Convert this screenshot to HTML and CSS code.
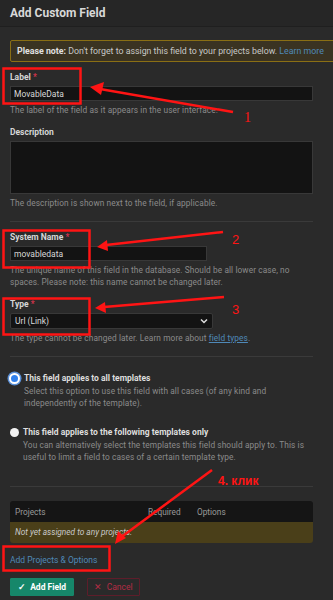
FILE: index.html
```html
<!DOCTYPE html>
<html lang="en">
<head>
    <meta charset="UTF-8">
    <meta name="viewport" content="width=device-width, initial-scale=1.0">
    <title>Add Custom Field</title>
    <link rel="stylesheet" href="styles.css">
</head>
<body>
<div class="modal">
    <header class="modal-header">
        <h1>Add Custom Field</h1>
    </header>

    <div class="modal-body">
        <div class="note">
            <strong>Please note:</strong> Don't forget to assign this field to your projects below. <a href="#">Learn more</a>
        </div>

        <div class="field">
            <label>Label <span class="req">*</span></label>
            <input type="text" class="input input-wide" value="MovableData">
            <p class="help">The label of the field as it appears in the user interface.</p>
        </div>

        <div class="field">
            <label>Description</label>
            <textarea class="input textarea"></textarea>
            <p class="help">The description is shown next to the field, if applicable.</p>
        </div>

        <hr>

        <div class="field">
            <label>System Name <span class="req">*</span></label>
            <input type="text" class="input input-short" value="movabledata">
            <p class="help">The unique name of this field in the database. Should be all lower case, no spaces. Please note: this name cannot be changed later.</p>
        </div>

        <div class="field">
            <label>Type <span class="req">*</span></label>
            <div class="select">
                <span>Url (Link)</span>
                <svg width="8" height="6" viewBox="0 0 8 6"><path d="M1 1.5 L4 4.5 L7 1.5" fill="none" stroke="#ddd" stroke-width="1.5"/></svg>
            </div>
            <p class="help">The type cannot be changed later. Learn more about <a href="#" class="ul">field types</a>.</p>
        </div>

        <hr>

        <div class="option first">
            <span class="radio checked"></span>
            <div>
                <div class="option-title">This field applies to all templates</div>
                <p class="help">Select this option to use this field with all cases (of any kind and independently of the template).</p>
            </div>
        </div>

        <div class="option second">
            <span class="radio"></span>
            <div>
                <div class="option-title">This field applies to the following templates only</div>
                <p class="help">You can alternatively select the templates this field should apply to. This is useful to limit a field to cases of a certain template type.</p>
            </div>
        </div>

        <hr class="hr-last">

        <div class="projects">
            <div class="projects-head">
                <span class="col-project">Projects</span>
                <span class="col-required">Required</span>
                <span>Options</span>
            </div>
            <div class="projects-empty">Not yet assigned to any projects.</div>
        </div>

        <a href="#" class="add-link">Add Projects &amp; Options</a>

        <div class="actions">
            <button class="btn btn-primary">&#10003;&nbsp; Add Field</button>
            <button class="btn btn-cancel">&#10005;&nbsp; Cancel</button>
        </div>
    </div>

    <!-- annotations drawn on top of the screenshot -->
    <svg class="marks" width="333" height="600" viewBox="0 0 333 600">
        <g fill="none" stroke="#ff1414" stroke-width="2.5">
            <rect x="3.5" y="68.5" width="77" height="35"/>
            <rect x="3.5" y="230.5" width="86" height="37"/>
            <rect x="3.5" y="298.5" width="86" height="36"/>
            <rect x="3.5" y="546.5" width="106" height="24"/>
            <line x1="233" y1="112" x2="100" y2="89"/>
            <line x1="223" y1="232" x2="106" y2="245"/>
            <line x1="224" y1="297" x2="104" y2="307"/>
            <line x1="212" y1="470" x2="120" y2="538"/>
        </g>
        <g fill="#ff1414">
            <polygon points="90,87 104,82 101,95"/>
            <polygon points="97,247 107,240 108,251"/>
            <polygon points="95,308 105,302 106,313"/>
            <polygon points="115,544 118,531 126,538"/>
        </g>
        <g class="mark-num">
            <text x="244" y="122">1</text>
            <text x="232" y="244" class="mark-sans">2</text>
            <text x="232" y="314" class="mark-sans">3</text>
            <text x="218" y="485" class="mark-bold">4. клик</text>
        </g>
    </svg>
</div>
</body>
</html>
```

FILE: styles.css
```css
body {
    margin: 0;
    padding: 0;
    background: #2a2a2a;
    font-family: Roboto, "Liberation Sans", sans-serif;
    color: #cfcfcf;
    overflow: hidden;
}
.modal {
    position: relative;
    width: 333px;
    height: 600px;
    overflow: hidden;
    background: #2a2a2a;
}
.modal-header {
    height: 26px;
    background: #262626;
    border-bottom: 1px solid #1f1f1f;
    padding: 0 10px;
    display: flex;
    align-items: center;
}
.modal-header h1 {
    margin: 0;
    font-size: 12px;
    font-weight: bold;
    color: #d8d8d8;
}
.modal-body {
    padding: 13px 20px 0 10px;
}
.note {
    height: 20px;
    margin-right: -40px;
    border: 1px solid #8a6f14;
    border-radius: 2px;
    background: #3a3322;
    color: #c8c8c8;
    font-size: 8.8px;
    line-height: 20px;
    padding-left: 6px;
    white-space: nowrap;
}
.note strong {
    color: #e0e0e0;
}
a {
    color: #4f89b8;
    text-decoration: none;
}
a.ul {
    text-decoration: underline;
}
.field {
    margin-top: 9px;
}
.field + .field {
    margin-top: 10px;
}
label {
    display: block;
    font-size: 8.5px;
    line-height: 12px;
    font-weight: bold;
    color: #d6d6d6;
    margin-bottom: 3px;
}
.req {
    color: #d2344c;
}
.input {
    display: block;
    box-sizing: border-box;
    height: 15px;
    background: #131313;
    border: 1px solid #383838;
    color: #d8d8d8;
    font-family: inherit;
    font-size: 8.5px;
    padding: 0 3px;
    margin: 0;
    outline: none;
}
.input-wide {
    width: 303px;
}
.input-short {
    width: 197px;
}
.textarea {
    width: 303px;
    height: 53px;
    resize: none;
}
.select {
    box-sizing: border-box;
    width: 203px;
    height: 16px;
    background: #131313;
    border: 1px solid #383838;
    border-radius: 2px;
    display: flex;
    align-items: center;
    justify-content: space-between;
    padding: 0 4px;
    font-size: 8.5px;
    color: #d8d8d8;
}
.help {
    margin: 3px 0 0;
    font-size: 8.3px;
    line-height: 12px;
    letter-spacing: 0.1px;
    color: #8b8b8b;
}
hr {
    border: none;
    border-top: 1px solid #3a3a3a;
    margin: 12px 0 0;
    width: 303px;
}
.hr-last {
    margin-top: 23px;
}
.option {
    display: flex;
    gap: 4px;
}
.option.first {
    margin-top: 15px;
}
.option.second {
    margin-top: 17px;
}
.option .help {
    margin-top: 1px;
    padding-right: 6px;
}
.option-title {
    font-size: 8.5px;
    line-height: 12px;
    font-weight: bold;
    color: #dedede;
}
.radio {
    flex: none;
    box-sizing: border-box;
    width: 9px;
    height: 9px;
    margin: 1.5px 0 0 0;
    border-radius: 50%;
    background: #f2f2f2;
}
.radio.checked {
    width: 11px;
    height: 11px;
    margin: 0.5px 0 0 -1px;
    background: #2f80ed;
    border: 2px solid #fff;
    box-shadow: 0 0 0 1.5px #5a8fd6;
}
.projects {
    margin-top: 14px;
    width: 303px;
    border-radius: 3px;
    overflow: hidden;
    font-size: 8.3px;
}
.projects-head {
    height: 21px;
    background: #151515;
    display: flex;
    align-items: center;
    padding-left: 5px;
    color: #9a9a9a;
}
.col-project {
    width: 133px;
}
.col-required {
    width: 49px;
}
.projects-empty {
    height: 21px;
    line-height: 21px;
    background: #4a3f19;
    padding-left: 5px;
    font-style: italic;
    color: #c9c9c9;
}
.add-link {
    display: block;
    margin-top: 11px;
    font-size: 8.5px;
    line-height: 12px;
}
.actions {
    display: flex;
    gap: 13px;
    margin-top: 12px;
}
.btn {
    height: 18px;
    font-family: inherit;
    font-size: 8.5px;
    font-weight: bold;
    border-radius: 1px;
    padding: 0 6px;
}
.btn-primary {
    width: 64px;
    background: #16876a;
    border: 1px solid #16876a;
    color: #fff;
}
.btn-cancel {
    width: 53px;
    background: transparent;
    border: 1px solid #5e1d2a;
    color: #b42c45;
    font-weight: normal;
}
.marks {
    position: absolute;
    top: 0;
    left: 0;
    pointer-events: none;
}
.mark-num {
    fill: #ff1414;
    font-family: "Liberation Serif", serif;
    font-size: 14px;
}
.mark-sans {
    font-family: "Liberation Sans", sans-serif;
    font-size: 13px;
}
.mark-bold {
    font-family: "Liberation Sans", sans-serif;
    font-weight: bold;
    font-size: 12px;
}
```
